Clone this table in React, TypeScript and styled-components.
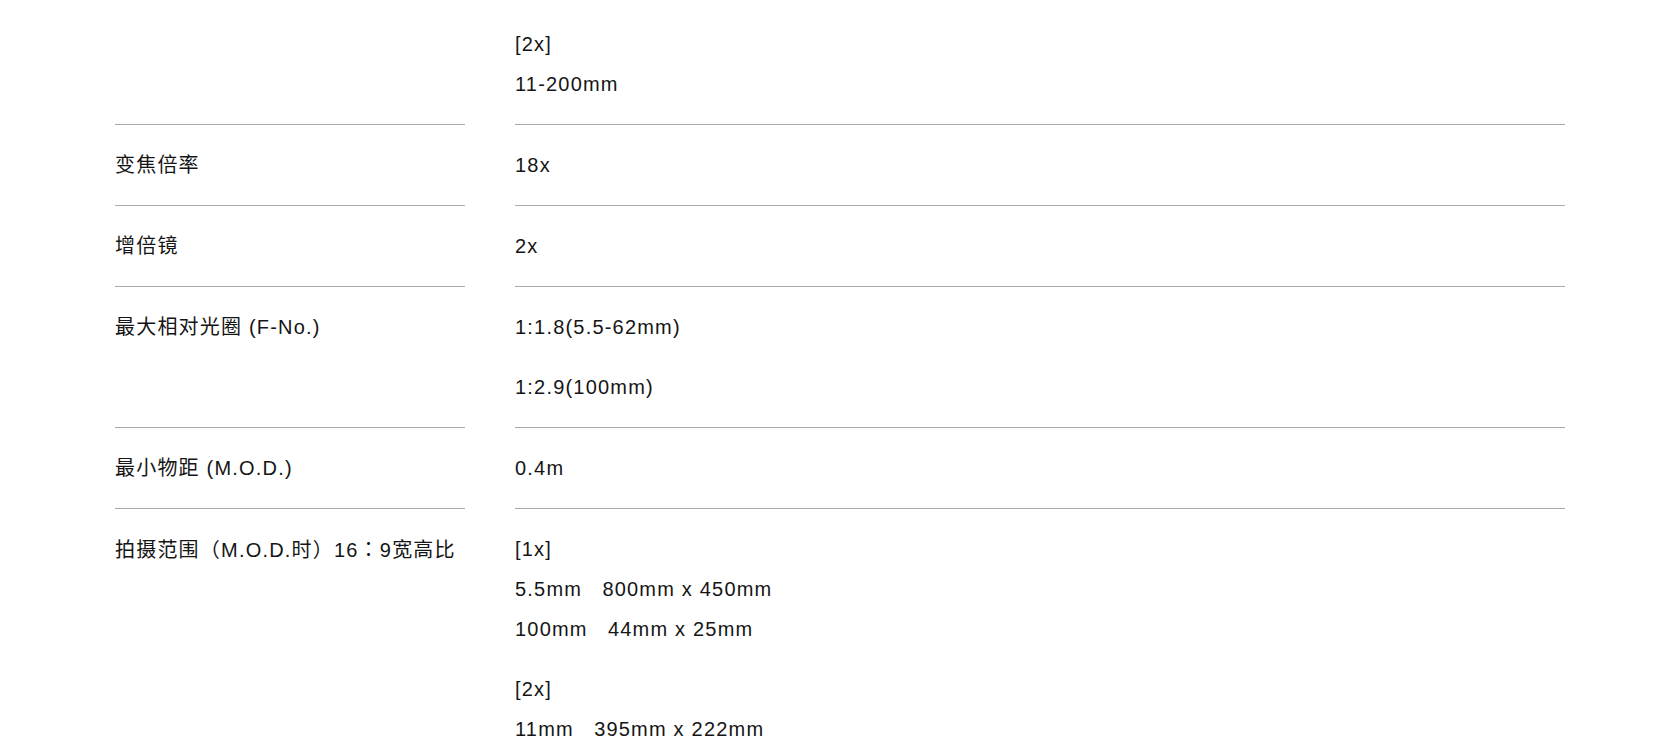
import React from "react";
import styled, { createGlobalStyle } from "styled-components";

const Global = createGlobalStyle`
  html, body {
    margin: 0;
    padding: 0;
    background: #ffffff;
    overflow: hidden;
  }
  body {
    font-family: "Liberation Sans", "Noto Sans CJK SC", Arial, sans-serif;
    color: #151515;
  }
`;

const Table = styled.div`
  width: 1450px;
  margin: 0 auto;
`;

const Row = styled.div`
  display: grid;
  grid-template-columns: 350px 1050px;
  column-gap: 50px;
`;

const Cell = styled.div<{ $top?: number }>`
  border-bottom: 1px solid #aaaaaa;
  padding: ${(p) => p.$top ?? 20}px 0 20px;
  font-size: 20px;
  line-height: 40px;
  letter-spacing: 1.2px;
`;

const Punct = styled.span`
  font-family: "Noto Sans CJK KR", "Noto Sans CJK TC", sans-serif;
`;

const Para = styled.p`
  margin: 0;
  white-space: pre-wrap;
  & + & {
    margin-top: 20px;
  }
`;

const Line = styled.div`
  white-space: pre-wrap;
`;

type Spec = { label: string; values: string[][]; top?: number };

const specs: Spec[] = [
  { label: "", values: [["[2x]", "11-200mm"]], top: 24 },
  { label: "变焦倍率", values: [["18x"]] },
  { label: "增倍镜", values: [["2x"]] },
  { label: "最大相对光圈 (F-No.)", values: [["1:1.8(5.5-62mm)"], ["1:2.9(100mm)"]] },
  { label: "最小物距 (M.O.D.)", values: [["0.4m"]] },
  {
    label: "拍摄范围（M.O.D.时）16：9宽高比",
    values: [
      ["[1x]", "5.5mm   800mm x 450mm", "100mm   44mm x 25mm"],
      ["[2x]", "11mm   395mm x 222mm"],
    ],
  },
];

function Label({ text }: { text: string }) {
  const parts = text.split(/([（）：])/);
  return (
    <>
      {parts.map((p, i) =>
        /^[（）：]$/.test(p) ? <Punct key={i}>{p}</Punct> : <React.Fragment key={i}>{p}</React.Fragment>
      )}
    </>
  );
}

export default function App() {
  return (
    <>
      <Global />
      <Table>
        {specs.map((s, i) => (
          <Row key={i}>
            <Cell $top={s.top}>
              <Label text={s.label} />
            </Cell>
            <Cell $top={s.top}>
              {s.values.map((para, j) => (
                <Para key={j}>
                  {para.map((l, k) => (
                    <Line key={k}>{l}</Line>
                  ))}
                </Para>
              ))}
            </Cell>
          </Row>
        ))}
      </Table>
    </>
  );
}
